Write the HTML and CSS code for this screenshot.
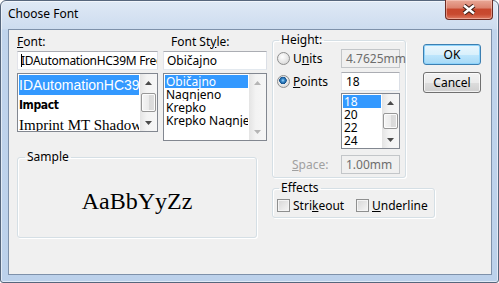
FILE: index.html
```html
<!DOCTYPE html>
<html lang="en">
<head>
  <meta charset="UTF-8">
  <title>Choose Font</title>
  <link rel="stylesheet" href="styles.css">
</head>
<body>
  <div class="window">
    <div class="titlebar">
      <span class="title">Choose Font</span>
      <span class="close-btn">
        <svg width="14" height="11" viewBox="0 0 14 11">
          <path d="M2 1.5L12 9.5M12 1.5L2 9.5" stroke="#3b1d17" stroke-width="4.5"/>
          <path d="M2 1.5L12 9.5M12 1.5L2 9.5" stroke="#fff" stroke-width="2.4"/>
        </svg>
      </span>
    </div>

    <div class="client">
      <div class="left-area">
        <div class="pickers">
          <div class="font-col">
            <div class="label"><u>F</u>ont:</div>
            <div class="textbox"><span class="caret"></span>IDAutomationHC39M Free</div>
            <div class="listbox font-list">
              <div class="items">
                <div class="item selected f-id">IDAutomationHC39M Free</div>
                <div class="item f-impact">Impact</div>
                <div class="item f-imprint">Imprint MT Shadow</div>
              </div>
              <div class="scrollbar">
                <div class="arrow"><svg width="7" height="4" viewBox="0 0 7 4"><path d="M3.5 0L7 4H0z"/></svg></div>
                <div class="track"><div class="thumb font-thumb"></div></div>
                <div class="arrow"><svg width="7" height="4" viewBox="0 0 7 4"><path d="M0 0H7L3.5 4z"/></svg></div>
              </div>
            </div>
          </div>

          <div class="style-col">
            <div class="label">Font St<u>y</u>le:</div>
            <div class="textbox">Običajno</div>
            <div class="listbox style-list">
              <div class="items">
                <div class="item selected">Običajno</div>
                <div class="item">Nagnjeno</div>
                <div class="item">Krepko</div>
                <div class="item">Krepko Nagnjeno</div>
              </div>
              <div class="scrollbar disabled">
                <div class="arrow"><svg width="7" height="4" viewBox="0 0 7 4"><path d="M3.5 0L7 4H0z"/></svg></div>
                <div class="track"></div>
                <div class="arrow"><svg width="7" height="4" viewBox="0 0 7 4"><path d="M0 0H7L3.5 4z"/></svg></div>
              </div>
            </div>
          </div>
        </div>

        <fieldset class="group sample-group">
          <legend>Sample</legend>
          <div class="sample-text">AaBbYyZz</div>
        </fieldset>
      </div>

      <div class="right-area">
        <div class="top-right">
          <fieldset class="group height-group">
            <legend>Height:</legend>
            <div class="height-grid">
              <div class="option"><span class="radio"></span>U<u>n</u>its</div>
              <div class="field disabled">4.7625mm</div>

              <div class="option row-points"><span class="radio checked"></span><u>P</u>oints</div>
              <div class="field row-points">18</div>

              <div class="listbox points-list">
                <div class="items">
                  <div class="item selected">18</div>
                  <div class="item">20</div>
                  <div class="item">22</div>
                  <div class="item">24</div>
                </div>
                <div class="scrollbar">
                  <div class="arrow"><svg width="7" height="4" viewBox="0 0 7 4"><path d="M3.5 0L7 4H0z"/></svg></div>
                  <div class="track"><div class="thumb points-thumb"></div></div>
                  <div class="arrow"><svg width="7" height="4" viewBox="0 0 7 4"><path d="M0 0H7L3.5 4z"/></svg></div>
                </div>
              </div>

              <div class="space-label row-space"><u>S</u>pace:</div>
              <div class="field disabled row-space">1.00mm</div>
            </div>
          </fieldset>

          <div class="buttons">
            <div class="btn default">OK</div>
            <div class="btn">Cancel</div>
          </div>
        </div>

        <fieldset class="group effects-group">
          <legend>Effects</legend>
          <div class="checks">
            <div class="check"><span class="checkbox"></span>Stri<u>k</u>eout</div>
            <div class="check"><span class="checkbox"></span><u>U</u>nderline</div>
          </div>
        </fieldset>
      </div>
    </div>
  </div>
</body>
</html>
```

FILE: styles.css
```css
body {
  margin: 0;
  font-family: "Noto Sans", sans-serif;
  font-size: 12px;
  color: #000;
}

/* window frame */
.window {
  box-sizing: border-box;
  width: 499px;
  height: 283px;
  display: flex;
  flex-direction: column;
  padding: 0 6px 7px 7px;
  border: 1px solid #56667c;
  border-radius: 6px 6px 3px 3px;
  background: linear-gradient(to bottom, #dfe9f5 0, #cddcef 28px, #c0d4ec 29px, #bcd1eb 100%);
  box-shadow: inset 0 0 0 1px rgba(255, 255, 255, 0.55);
}

.titlebar {
  height: 28px;
  display: flex;
  justify-content: space-between;
  align-items: flex-start;
}

.title {
  padding-top: 5px;
  line-height: 16px;
}

.close-btn {
  box-sizing: border-box;
  width: 48px;
  height: 20px;
  margin: -1px -1px 0 0;
  display: flex;
  align-items: center;
  justify-content: center;
  border: 1px solid #6d2b22;
  border-top: none;
  border-radius: 0 0 4px 4px;
  background: linear-gradient(to bottom, #e9a897 0, #dc8470 40%, #c7472d 50%, #c84a30 75%, #df7a62 100%);
  box-shadow: inset 0 0 0 1px rgba(255, 220, 210, 0.45);
}

.client {
  flex: 1;
  display: flex;
  padding: 2px 0 0 8px;
  background: #f0f0f0;
  border: 1px solid #7e91aa;
}

/* left side: font + style pickers, sample */
.left-area {
  width: 250px;
  margin-top: 2px;
}

.pickers {
  display: flex;
  gap: 5px;
}

.font-col {
  width: 141px;
}

.style-col {
  width: 104px;
}

.label {
  height: 16px;
  line-height: 16px;
  margin-bottom: 1px;
}

.style-col .label {
  padding-left: 8px;
}

.textbox {
  box-sizing: border-box;
  height: 19px;
  padding: 0 3px;
  line-height: 17px;
  white-space: nowrap;
  overflow: hidden;
  background: #fff;
  border: 1px solid #abadb3;
  border-color: #abadb3 #dbdfe6 #e3e9ef #e2e3ea;
}

.font-col .textbox {
  letter-spacing: -0.3px;
}

.caret {
  display: inline-block;
  width: 1px;
  height: 13px;
  margin-right: -1px;
  vertical-align: -2px;
  background: #000;
}

.listbox {
  box-sizing: border-box;
  display: flex;
  margin-top: 3px;
  background: #fff;
  border: 1px solid #828790;
}

.font-list {
  height: 59px;
}

.style-list {
  height: 68px;
}

.items {
  flex: 1;
  min-width: 0;
  padding: 1px;
  overflow: hidden;
}

.item {
  height: 13px;
  line-height: 13px;
  padding-left: 1px;
  white-space: nowrap;
  overflow: hidden;
}

.item.selected {
  background: #3399ff;
  color: #fff;
}

.font-list .item {
  height: 20px;
  line-height: 20px;
  padding-left: 0;
}

.f-id {
  font-family: "Liberation Sans", sans-serif;
  font-size: 14px;
}

.f-impact {
  font-family: "DejaVu Sans", sans-serif;
  font-stretch: condensed;
  font-weight: bold;
  font-size: 12px;
  letter-spacing: -0.4px;
}

.f-imprint {
  font-family: "Liberation Serif", serif;
  font-size: 15px;
}

/* scrollbars */
.scrollbar {
  flex: none;
  width: 17px;
  display: flex;
  flex-direction: column;
  background: linear-gradient(to right, #e4e4e4, #f3f3f3 40%, #f6f6f6);
  color: #4a4a4a;
}

.scrollbar.disabled {
  color: #b5b5b5;
}

.arrow {
  height: 17px;
  display: flex;
  align-items: center;
  justify-content: center;
}

.arrow svg {
  fill: currentColor;
}

.track {
  flex: 1;
}

.thumb {
  box-sizing: border-box;
  margin: 2px 1px 0;
  border: 1px solid #979797;
  border-radius: 2px;
  background: linear-gradient(to right, #f5f5f5, #ebebeb 50%, #d9d9d9 51%, #dedede);
  box-shadow: inset 0 0 0 1px #fbfbfb;
}

.font-thumb {
  height: 19px;
}

.points-thumb {
  height: 16px;
}

/* group boxes */
.group {
  box-sizing: border-box;
  margin: 0;
  min-width: 0;
  border: 1px solid #d5dfe5;
  border-radius: 3px;
  box-shadow: inset 1px 1px 0 #fff, 1px 1px 0 #fff;
}

.group legend {
  padding: 0 2px;
  margin-left: 2px;
  line-height: 16px;
}

.sample-group {
  width: 240px;
  height: 89px;
  margin-top: 8px;
  padding: 0 4px;
}

.sample-group legend {
  margin-left: 3px;
}

.sample-text {
  padding-top: 22px;
  text-align: center;
  font-family: "Liberation Serif", serif;
  font-size: 24px;
  line-height: 28px;
}

/* right side */
.right-area {
  margin-left: 5px;
  display: flex;
  flex-direction: column;
}

.top-right {
  display: flex;
  align-items: flex-start;
}

.height-group {
  width: 134px;
  padding: 1px 4px 3px;
}

.height-grid {
  display: grid;
  grid-template-columns: 64px 59px;
}

.option,
.space-label {
  display: flex;
  align-items: center;
  height: 19px;
}

.row-points {
  margin-top: 4px;
}

.row-space {
  margin-top: 6px;
}

.space-label {
  padding-left: 15px;
  color: #a0a0a0;
}

.radio {
  box-sizing: border-box;
  width: 13px;
  height: 13px;
  margin-right: 3px;
  border: 1px solid #8e8f8f;
  border-radius: 50%;
  background: radial-gradient(circle at 40% 35%, #ffffff, #e6e6e6 55%, #cdcdcd);
}

.radio.checked {
  background:
    radial-gradient(circle at 45% 40%, #a8dcff 0, #3c8fd0 1.5px, #144f8a 3.5px, rgba(20, 79, 138, 0) 4px),
    radial-gradient(circle at 40% 35%, #ffffff, #e6e6e6 55%, #cdcdcd);
}

.field {
  box-sizing: border-box;
  height: 19px;
  padding: 0 4px;
  line-height: 17px;
  background: #fff;
  border: 1px solid #abadb3;
  border-color: #abadb3 #dbdfe6 #e3e9ef #e2e3ea;
}

.field.disabled {
  background: #f0f0f0;
  border-color: #c3c6c9;
  color: #6d6d6d;
}

.points-list {
  grid-column: 2;
  height: 56px;
  margin-top: 2px;
}

.buttons {
  display: flex;
  flex-direction: column;
  gap: 7px;
  margin: 12px 0 0 17px;
}

.btn {
  box-sizing: border-box;
  width: 58px;
  height: 21px;
  line-height: 19px;
  text-align: center;
  border: 1px solid #707070;
  border-radius: 3px;
  background: linear-gradient(to bottom, #f2f2f2 0, #ebebeb 50%, #dddddd 51%, #cfcfcf 100%);
  box-shadow: inset 0 0 0 1px rgba(255, 255, 255, 0.7);
}

.btn.default {
  border-color: #3c7fb1;
  background: linear-gradient(to bottom, #eaf6fd 0, #d9f0fc 50%, #bee6fd 51%, #a7d9f5 100%);
  box-shadow: inset 0 0 0 1px #8ed3fb;
}

.effects-group {
  width: 163px;
  margin-top: 2px;
  padding: 3px 4px 5px;
}

.checks {
  display: flex;
}

.check {
  display: flex;
  align-items: center;
  height: 13px;
}

.check:first-child {
  width: 79px;
}

.checkbox {
  box-sizing: border-box;
  width: 13px;
  height: 13px;
  margin-right: 3px;
  border: 1px solid #8e8f8f;
  background: linear-gradient(135deg, #d6d6d6, #f6f6f6);
  box-shadow: inset 0 0 0 1px #f4f4f4;
}
```
